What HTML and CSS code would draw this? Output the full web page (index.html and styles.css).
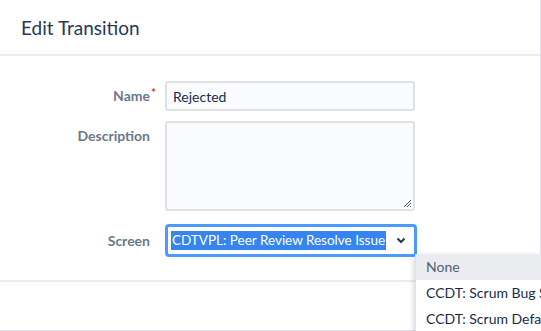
FILE: index.html
```html
<!DOCTYPE html>
<html lang="en">
<head>
  <meta charset="UTF-8" />
  <title>Edit Transition</title>
  <link rel="stylesheet" href="styles.css">
</head>
<body>
  <div class="dialog">
    <div class="dialog-header">
      <h2>Edit Transition</h2>
    </div>

    <div class="dialog-body">
      <div class="field">
        <label class="field-label">Name<span class="required">*</span></label>
        <input type="text" class="text-input" value="Rejected">
      </div>
      <div class="field">
        <label class="field-label">Description</label>
        <div class="textarea-box">
          <svg class="grip" width="9" height="9" viewBox="0 0 9 9">
            <path d="M8 1L1 8M8 4L4 8M8 7L7 8" stroke="#555" stroke-width="1"/>
          </svg>
        </div>
      </div>
      <div class="field">
        <label class="field-label">Screen</label>
        <div class="select-box">
          <span class="select-value">CDTVPL: Peer Review Resolve Issue</span>
          <svg class="chevron" width="10" height="7" viewBox="0 0 10 7">
            <path d="M1.5 1.5L5 5L8.5 1.5" fill="none" stroke="#253858" stroke-width="2"/>
          </svg>
        </div>
      </div>
    </div>

    <div class="dialog-footer"></div>
  </div>

  <ul class="option-list">
    <li class="option active">None</li>
    <li class="option">CCDT: Scrum Bug Screen</li>
    <li class="option">CCDT: Scrum Default Screen</li>
  </ul>
</body>
</html>
```

FILE: styles.css
```css
body {
  margin: 0;
  background: #ffffff;
  font-family: "Segoe UI", Lato, "Liberation Sans", sans-serif;
  color: #172b4d;
  overflow: hidden;
}
.dialog {
  width: 540px;
  height: 330px;
  border-right: 1px solid #dfe1e6;
  border-bottom: 1px solid #dfe1e6;
  background: #fff;
}
.dialog-header {
  height: 54px;
  border-bottom: 2px solid #ebecf0;
  padding: 0 21px;
  display: flex;
  align-items: center;
}
.dialog-header h2 {
  margin: 0;
  font-size: 19px;
  font-weight: 400;
  color: #253858;
}
.dialog-body {
  padding: 25px 0 23px;
  display: flex;
  flex-direction: column;
  gap: 10px;
  border-bottom: 2px solid #ebecf0;
}
.field {
  display: flex;
  align-items: flex-start;
}
.field-label {
  position: relative;
  width: 150px;
  margin-right: 15px;
  text-align: right;
  font-size: 14px;
  font-weight: 700;
  color: #6b778c;
  line-height: 20px;
  padding-top: 5px;
}
.required {
  position: absolute;
  right: -6px;
  top: 2px;
  color: #de350b;
  font-size: 12px;
}
.text-input {
  box-sizing: border-box;
  width: 250px;
  height: 30px;
  margin: 0;
  padding: 0 6px;
  border: 2px solid #dfe1e6;
  border-radius: 3px;
  background: #fafbfc;
  font-family: inherit;
  font-size: 14px;
  color: #172b4d;
}
.textarea-box {
  box-sizing: border-box;
  position: relative;
  width: 250px;
  height: 90px;
  border: 2px solid #dfe1e6;
  border-radius: 3px;
  background: #fafbfc;
}
.grip {
  position: absolute;
  right: 1px;
  bottom: 1px;
}
.field:last-child {
  margin-top: 3px;
}
.field:last-child .field-label {
  padding-top: 7px;
}
.select-box {
  box-sizing: border-box;
  width: 252px;
  height: 33px;
  border: 3px solid #4c9aff;
  border-radius: 4px;
  background: #fff;
  display: flex;
  align-items: center;
  justify-content: space-between;
  padding: 0 8px 0 3px;
}
.select-value {
  background: #3584f0;
  color: #fff;
  font-size: 13.5px;
  line-height: 19px;
  padding: 0 1px;
  white-space: nowrap;
}
.chevron {
  display: block;
  flex-shrink: 0;
}
.option-list {
  position: absolute;
  left: 415px;
  top: 254px;
  right: 0;
  margin: 0;
  padding: 0;
  list-style: none;
  background: #fff;
  border-left: 1px solid #dfe1e6;
  box-shadow: -1px 2px 6px rgba(9, 30, 66, 0.2);
  overflow: hidden;
}
.option {
  height: 26px;
  line-height: 26px;
  padding-left: 10px;
  font-size: 14px;
  color: #172b4d;
  white-space: nowrap;
}
.option.active {
  background: #ebecf0;
  color: #505f79;
}
```
